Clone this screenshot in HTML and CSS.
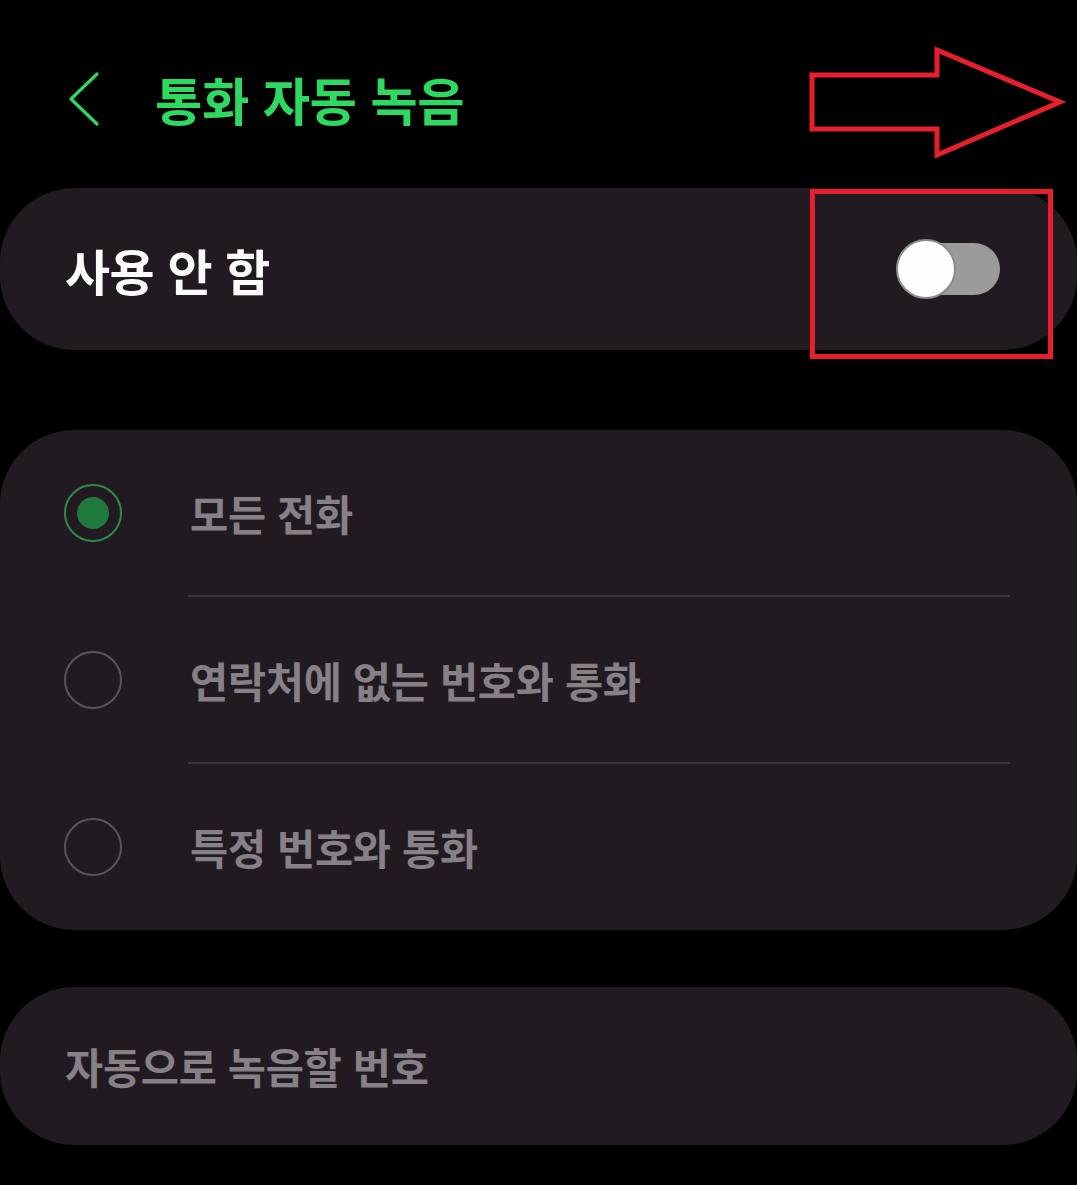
FILE: index.html
```html
<!DOCTYPE html>
<html lang="ko">
<head>
<meta charset="utf-8">
<title>통화 자동 녹음</title>
<link rel="stylesheet" href="styles.css">
</head>
<body>
<div class="screen">
  <header class="header">
    <svg class="back" width="40" height="56" viewBox="0 0 40 56">
      <polyline points="31,3 5,28 31,53" fill="none" stroke="#2fd860" stroke-width="3.2" stroke-linecap="round" stroke-linejoin="round"/>
    </svg>
    <h1 class="title">통화 자동 녹음</h1>
  </header>

  <section class="card card-master">
    <span class="master-label">사용 안 함</span>
    <span class="switch"><span class="knob"></span></span>
  </section>

  <section class="card card-options">
    <div class="option">
      <span class="radio radio-on"><span class="dot"></span></span>
      <span class="option-label">모든 전화</span>
    </div>
    <div class="divider"></div>
    <div class="option">
      <span class="radio"></span>
      <span class="option-label">연락처에 없는 번호와 통화</span>
    </div>
    <div class="divider"></div>
    <div class="option">
      <span class="radio"></span>
      <span class="option-label">특정 번호와 통화</span>
    </div>
  </section>

  <section class="card card-numbers">
    <span class="numbers-label">자동으로 녹음할 번호</span>
  </section>

  <svg class="annotation" width="1077" height="370" viewBox="0 0 1077 370">
    <polygon points="812,75 937,75 937,50 1060,102 937,155 937,129 812,129" fill="none" stroke="#e5202b" stroke-width="5" stroke-linejoin="miter"/>
    <rect x="812.5" y="191.5" width="238" height="165" fill="none" stroke="#e5202b" stroke-width="5"/>
  </svg>
</div>
</body>
</html>
```

FILE: styles.css
```css
html, body {
  margin: 0;
  padding: 0;
  background: #000;
}

body {
  font-family: "Noto Sans CJK KR", "Noto Sans", sans-serif;
  width: 1077px;
  height: 1185px;
  overflow: hidden;
}

.screen {
  position: relative;
  width: 1077px;
  height: 1185px;
}

.header {
  height: 178px;
  padding-top: 10px;
  display: flex;
  align-items: center;
  box-sizing: content-box;
}

.back {
  margin-left: 66px;
  flex: none;
}

.title {
  margin: 0 0 0 49px;
  font-size: 51.5px;
  font-weight: 700;
  color: #2fd860;
  letter-spacing: -0.5px;
  line-height: 1;
}

.card {
  background: #211b21;
  border-radius: 74px;
}

.card-master {
  height: 162px;
  display: flex;
  align-items: center;
  justify-content: space-between;
  padding: 0 77px 0 65px;
}

.master-label {
  font-size: 49px;
  font-weight: 700;
  color: #fbfbfb;
  letter-spacing: -0.5px;
}

.switch {
  position: relative;
  width: 103px;
  height: 52px;
  border-radius: 26px;
  background: #9b9b9b;
  display: block;
}

.knob {
  position: absolute;
  left: -1px;
  top: -4px;
  width: 56px;
  height: 56px;
  border-radius: 50%;
  background: #fdfdfd;
  border: 2px solid #8a8a8a;
}

.card-options {
  margin-top: 80px;
  height: 500px;
  box-sizing: border-box;
  display: flex;
  flex-direction: column;
}

.option {
  height: 165px;
  display: flex;
  align-items: center;
  padding-left: 64px;
}

.radio {
  width: 54px;
  height: 54px;
  border-radius: 50%;
  border: 2px solid #5a545a;
  flex: none;
  display: flex;
  align-items: center;
  justify-content: center;
}

.radio-on {
  border-color: #2e8a48;
}

.dot {
  width: 32px;
  height: 32px;
  border-radius: 50%;
  background: #207a3d;
}

.option-label {
  margin-left: 68px;
  font-size: 41.5px;
  font-weight: 700;
  color: #878187;
  letter-spacing: -0.3px;
}

.divider {
  height: 2px;
  background: #3b353b;
  margin: 0 67px 0 188px;
  flex: none;
}

.card-numbers {
  margin-top: 57px;
  height: 158px;
  display: flex;
  align-items: center;
  padding-left: 65px;
}

.numbers-label {
  font-size: 41.5px;
  font-weight: 700;
  color: #878187;
  letter-spacing: -0.3px;
}

.annotation {
  position: absolute;
  left: 0;
  top: 0;
  pointer-events: none;
}
```
